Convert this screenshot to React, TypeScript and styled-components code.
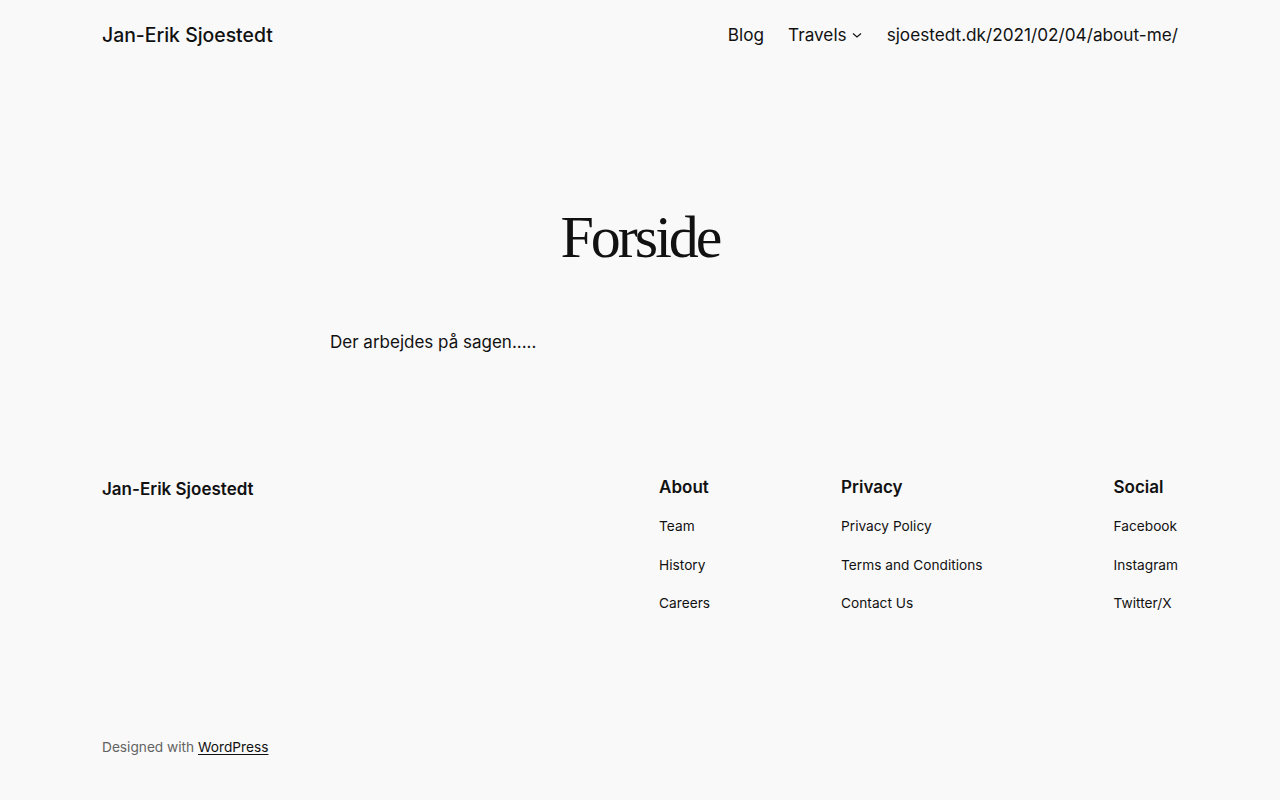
import React from "react";
import styled, { createGlobalStyle } from "styled-components";

const Global = createGlobalStyle`
  html, body { margin: 0; padding: 0; background: #f9f9f9; }
  body { font-family: Inter, "Noto Sans", sans-serif; color: #111111; -webkit-font-smoothing: antialiased; }
  a { color: inherit; text-decoration: none; }
`;

const Page = styled.div`
  min-height: 800px;
  background: #f9f9f9;
  display: flex;
  flex-direction: column;
`;

const Header = styled.header`
  display: flex;
  justify-content: space-between;
  align-items: center;
  padding: 0 102px;
  height: 69px;
`;

const SiteTitle = styled.a`
  font-size: 19.4px;
  font-weight: 500;
`;

const Nav = styled.nav`
  display: flex;
  align-items: center;
  gap: 24px;
  font-size: 17.2px;
`;

const NavItem = styled.a`
  display: inline-flex;
  align-items: center;
  gap: 4px;
`;

const Main = styled.main`
  display: flex;
  flex-direction: column;
  align-items: center;
  padding-top: 132px;
`;

const Title = styled.h1`
  margin: 0;
  font-family: "Liberation Serif", "Times New Roman", serif;
  font-weight: 400;
  font-size: 60px;
  line-height: 1.2;
  letter-spacing: -3px;
`;

const Content = styled.div`
  width: 620px;
  padding-top: 56px;
  font-size: 17px;
  line-height: 1.55;
`;

const Footer = styled.footer`
  padding: 121px 102px 0;
  display: flex;
  flex-direction: column;
`;

const FooterTop = styled.div`
  display: flex;
  justify-content: space-between;
  align-items: flex-start;
`;

const FooterTitle = styled.div`
  font-size: 17px;
  font-weight: 600;
  padding-top: 3px;
`;

const Columns = styled.div`
  display: flex;
  gap: 131px;
`;

const Column = styled.div`
  display: flex;
  flex-direction: column;
`;

const ColHead = styled.h2`
  margin: 0 0 19px;
  font-size: 17px;
  font-weight: 600;
  line-height: 1.3;
`;

const ColLink = styled.a`
  font-size: 13.7px;
  line-height: 1.4;
  margin-bottom: 19.3px;
`;

const Credit = styled.div`
  margin-top: 106px;
  font-size: 13.7px;
  color: #636363;
  a { color: #111111; text-decoration: underline; text-underline-offset: 2px; }
`;

const Chevron = () => (
  <svg width="12" height="12" viewBox="0 0 12 12" fill="none">
    <path d="M2 4.5l4 3.5 4-3.5" stroke="#111" strokeWidth="1.1" />
  </svg>
);

const cols = [
  { head: "About", links: ["Team", "History", "Careers"] },
  { head: "Privacy", links: ["Privacy Policy", "Terms and Conditions", "Contact Us"] },
  { head: "Social", links: ["Facebook", "Instagram", "Twitter/X"] },
];

export default function App() {
  return (
    <Page>
      <Global />
      <Header>
        <SiteTitle href="#">Jan-Erik Sjoestedt</SiteTitle>
        <Nav>
          <NavItem href="#">Blog</NavItem>
          <NavItem href="#">
            Travels <Chevron />
          </NavItem>
          <NavItem href="#">sjoestedt.dk/2021/02/04/about-me/</NavItem>
        </Nav>
      </Header>
      <Main>
        <Title>Forside</Title>
        <Content>Der arbejdes på sagen.....</Content>
      </Main>
      <Footer>
        <FooterTop>
          <FooterTitle>Jan-Erik Sjoestedt</FooterTitle>
          <Columns>
            {cols.map((c) => (
              <Column key={c.head}>
                <ColHead>{c.head}</ColHead>
                {c.links.map((l) => (
                  <ColLink key={l} href="#">
                    {l}
                  </ColLink>
                ))}
              </Column>
            ))}
          </Columns>
        </FooterTop>
        <Credit>
          Designed with <a href="#">WordPress</a>
        </Credit>
      </Footer>
    </Page>
  );
}
